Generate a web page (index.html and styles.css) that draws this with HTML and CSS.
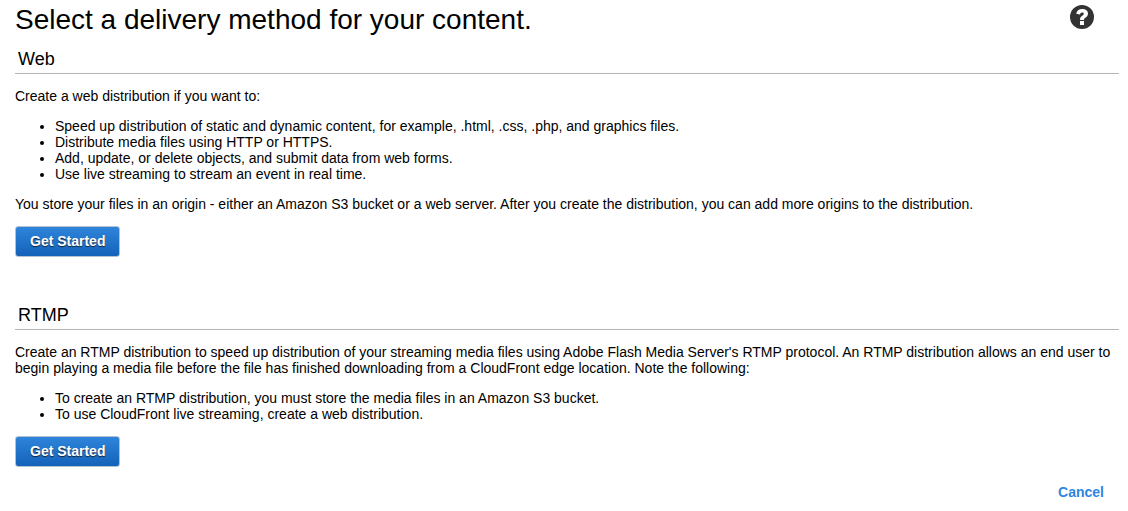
FILE: index.html
```html
<!DOCTYPE html>
<html lang="en">
<head>
<meta charset="utf-8">
<meta name="viewport" content="width=device-width, initial-scale=1">
<title>Select a delivery method</title>
<link rel="stylesheet" href="styles.css">
</head>
<body>
<main class="page">
  <header class="page-header">
    <h1 class="page-title">Select a delivery method for your content.</h1>
    <button class="help" type="button" aria-label="Help">
      <svg class="help-icon" viewBox="0 0 24 24" aria-hidden="true">
        <circle cx="12" cy="12" r="12" fill="#333"/>
        <path d="M6.300 8.800C6.600 5.500 8.900 4 12.200 4c3.400 0 5.800 1.700 5.800 4.600 0 2.300-1.300 3.300-2.700 4.200-1 .6-1.300 1-1.300 2.200h-4c0-2.400.8-3.300 2.300-4.300 1-.7 1.500-1.100 1.500-1.900 0-.9-.7-1.400-1.700-1.400-1.200 0-1.900.7-2.100 2z" fill="#fff"/>
        <rect x="10" y="16" width="4" height="4" fill="#fff"/>
      </svg>
    </button>
  </header>

  <section class="method">
    <h2 class="method-title">Web</h2>
    <p class="text">Create a web distribution if you want to:</p>
    <ul class="list">
      <li>Speed up distribution of static and dynamic content, for example, .html, .css, .php, and graphics files.</li>
      <li>Distribute media files using HTTP or HTTPS.</li>
      <li>Add, update, or delete objects, and submit data from web forms.</li>
      <li>Use live streaming to stream an event in real time.</li>
    </ul>
    <p class="text">You store your files in an origin - either an Amazon S3 bucket or a web server. After you create the distribution, you can add more origins to the distribution.</p>
    <button class="start" type="button">Get Started</button>
  </section>

  <section class="method">
    <h2 class="method-title">RTMP</h2>
    <p class="text">Create an RTMP distribution to speed up distribution of your streaming media files using Adobe Flash Media Server's RTMP protocol. An RTMP distribution allows an end user to begin playing a media file before the file has finished downloading from a CloudFront edge location. Note the following:</p>
    <ul class="list">
      <li>To create an RTMP distribution, you must store the media files in an Amazon S3 bucket.</li>
      <li>To use CloudFront live streaming, create a web distribution.</li>
    </ul>
    <button class="start" type="button">Get Started</button>
  </section>

  <footer class="page-footer">
    <a class="cancel" href="#">Cancel</a>
  </footer>
</main>
</body>
</html>
```
FILE: styles.css
```css
body {
  margin: 0;
  background: #fff;
  color: #000;
  font-family: "Liberation Sans", Arial, sans-serif;
  font-size: 14px;
  line-height: 16px;
}

.page {
  padding: 4px 9px 0 15px;
}

.page-header {
  display: flex;
  justify-content: space-between;
  align-items: flex-start;
  padding-right: 25px;
}

.page-title {
  margin: 0;
  font-size: 28px;
  font-weight: 400;
  line-height: 32px;
}

.help {
  padding: 1px 0 0;
  border: 0;
  background: none;
  cursor: pointer;
}

.help-icon {
  display: block;
  width: 24px;
  height: 24px;
}

.method {
  padding-top: 12px;
}

.method + .method {
  padding-top: 47px;
}

.method-title {
  margin: 0 0 14px;
  padding: 0 3px 3px;
  border-bottom: 1px solid #b4b4b4;
  font-size: 18px;
  font-weight: 400;
  line-height: 22px;
}

.text {
  margin: 0;
}

.list {
  margin: 14px 0;
  padding-left: 40px;
}

.start {
  display: block;
  margin-top: 14px;
  padding: 6px 14px 7px;
  border: 1px solid #b4c3d2;
  border-radius: 3px;
  background: linear-gradient(#2f86dc, #1361b8) border-box;
  color: #fff;
  font: bold 14px/16px "Liberation Sans", Arial, sans-serif;
  text-shadow: 0 1px 1px #123;
  cursor: pointer;
}

.page-footer {
  display: flex;
  justify-content: flex-end;
  padding: 17px 15px 0 0;
}

.cancel {
  color: #2e86de;
  font-weight: 700;
  text-decoration: none;
}
```
